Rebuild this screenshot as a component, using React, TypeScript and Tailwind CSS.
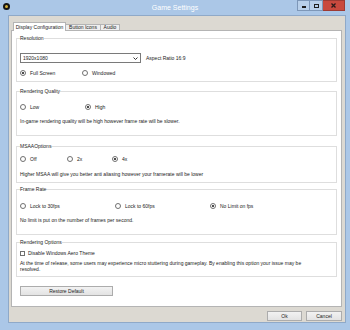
import React from 'react'

type RadioProps = { label: string; checked?: boolean; className?: string }

function Radio({ label, checked, className }: RadioProps) {
  return (
    <label className={`flex items-center gap-[4px] ${className ?? ''}`}>
      <span className="w-[6px] h-[6px] rounded-full border border-[#707070] bg-white flex items-center justify-center">
        {checked && <span className="w-[2px] h-[2px] rounded-full bg-[#111]" />}
      </span>
      <span>{label}</span>
    </label>
  )
}

function Group({ title, className, children }: { title: string; className?: string; children: React.ReactNode }) {
  return (
    <fieldset className={`border border-[#dedede] px-[3px] ${className ?? ''}`}>
      <legend className="text-[5px] leading-[6px]">{title}</legend>
      {children}
    </fieldset>
  )
}

function WinButton({ children, className }: { children: React.ReactNode; className?: string }) {
  return (
    <button className={`h-[10px] border border-[#acacac] bg-gradient-to-b from-[#f2f2f2] to-[#e3e3e3] text-[5px] leading-none ${className ?? ''}`}>
      {children}
    </button>
  )
}

export default function App() {
  return (
    <div className="w-[350px] h-[330px] bg-[#abc7e7] flex flex-col overflow-hidden font-['Liberation_Sans',Arial,sans-serif] text-[#222]">
      {/* title bar */}
      <div className="h-[15px] grid grid-cols-[1fr_auto_1fr] items-start">
        <div className="pt-[3px] pl-[3px]">
          <span className="w-[7px] h-[7px] rounded-full bg-[#151515] flex items-center justify-center">
            <span className="w-[3px] h-[3px] rounded-full bg-[#d8b23a]" />
          </span>
        </div>
        <div className="text-[7px] leading-[15px] text-white">Game Settings</div>
        <div className="flex justify-end pr-[5px]">
          <div className="w-[13px] h-[11px] border border-[#7d97b8] bg-[#b9d0ea] flex items-center justify-center">
            <span className="w-[4px] h-[2px] bg-[#1e1e1e] mt-[2px]" />
          </div>
          <div className="w-[13px] h-[11px] border border-l-0 border-[#7d97b8] bg-[#b9d0ea] flex items-center justify-center">
            <span className="w-[5px] h-[4px] border-[1.5px] border-[#1e1e1e]" />
          </div>
          <div className="w-[22px] h-[11px] bg-[#c9493e] border border-l-0 border-[#9e3a33] flex items-center justify-center">
            <svg width="5" height="5" viewBox="0 0 5 5">
              <path d="M0.5 0.5 L4.5 4.5 M4.5 0.5 L0.5 4.5" stroke="#2a1a1a" strokeWidth="1.3" />
            </svg>
          </div>
        </div>
      </div>

      {/* client */}
      <div className="flex-1 ml-[8px] mr-[4px] mb-[7px] bg-[#dcd9d2] border border-[#8fa9c8] flex flex-col pl-[2px] pr-[3px] pt-[6px] pb-[1px]">
        <div className="h-[9px] flex items-end pl-[2px] text-[5px] leading-none -mb-px relative z-10">
          <div className="w-[53px] h-[9px] bg-white border border-b-0 border-[#b4b4b4] flex items-center justify-center">
            Display Configuration
          </div>
          <div className="w-[35px] h-[7px] bg-[#efefef] border border-l-0 border-[#b4b4b4] flex items-center justify-center">
            Button Icons
          </div>
          <div className="w-[19px] h-[7px] bg-[#efefef] border border-l-0 border-[#b4b4b4] flex items-center justify-center">
            Audio
          </div>
        </div>

        <div className="flex-1 bg-white border border-[#b4b4b4] flex flex-col px-[4px] pt-[4px] text-[5px] leading-[6px]">
          <Group title="Resolution" className="pb-[5px]">
            <div className="mt-[12px] flex items-center gap-[5px]">
              <div className="w-[121px] h-[10px] border border-[#7a7a7a] bg-white flex items-center justify-between pl-[2px] pr-[2px]">
                <span>1920x1080</span>
                <svg width="5" height="3" viewBox="0 0 5 3">
                  <path d="M0.5 0.5 L2.5 2.5 L4.5 0.5" stroke="#333" strokeWidth="1" fill="none" />
                </svg>
              </div>
              <span>Aspect Ratio 16:9</span>
            </div>
            <div className="mt-[7px] h-[6px] flex items-center">
              <Radio label="Full Screen" checked className="w-[62px]" />
              <Radio label="Windowed" />
            </div>
          </Group>

          <Group title="Rendering Quality" className="mt-[6px] pb-[11px]">
            <div className="mt-[10px] h-[6px] flex items-center">
              <Radio label="Low" className="w-[65px]" />
              <Radio label="High" checked />
            </div>
            <p className="mt-[8px]">In-game rendering quality will be high however frame rate will be slower.</p>
          </Group>

          <Group title="MSAAOptions" className="mt-[7px] pb-[5px]">
            <div className="mt-[7px] h-[6px] flex items-center">
              <Radio label="Off" className="w-[47px]" />
              <Radio label="2x" className="w-[45px]" />
              <Radio label="4x" checked />
            </div>
            <p className="mt-[9px]">Higher MSAA will give you better anti aliasing however your framerate will be lower</p>
          </Group>

          <Group title="Frame Rate" className="mt-[3px] pb-[11px]">
            <div className="mt-[11px] h-[6px] flex items-center">
              <Radio label="Lock to 30fps" className="w-[95px]" />
              <Radio label="Lock to 60fps" className="w-[95px]" />
              <Radio label="No Limit on fps" checked />
            </div>
            <p className="mt-[8px]">No limit is put on the number of frames per second.</p>
          </Group>

          <Group title="Rendering Options" className="mt-[4px] pb-[4px]">
            <label className="mt-[5px] h-[6px] flex items-center gap-[3px]">
              <span className="w-[5px] h-[5px] border border-[#707070] bg-white" />
              <span>Disable Windows Aero Theme</span>
            </label>
            <p className="mt-[4px]">
              At the time of release, some users may experience micro stuttering during gameplay. By enabling this option your issue may be
              <br />
              resolved.
            </p>
          </Group>

          <WinButton className="mt-[9px] ml-[4px] w-[93px]">Restore Default</WinButton>
        </div>

        <div className="mt-[4px] flex justify-end gap-[4px]">
          <WinButton className="w-[35px]">Ok</WinButton>
          <WinButton className="w-[36px]">Cancel</WinButton>
        </div>
      </div>
    </div>
  )
}
